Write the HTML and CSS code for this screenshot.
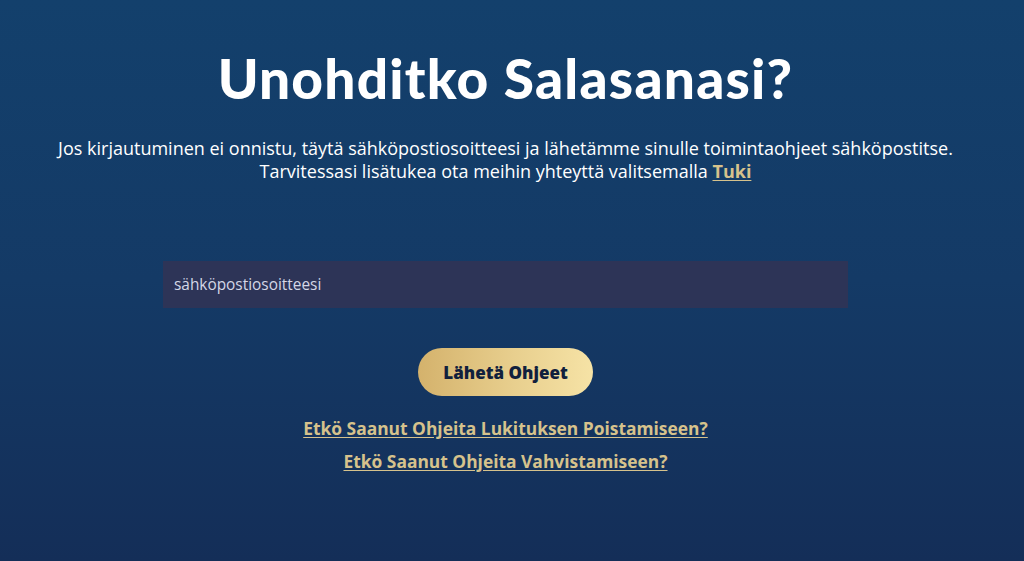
FILE: index.html
```html
<!DOCTYPE html>
<html lang="fi">
<head>
<meta charset="utf-8">
<title>Unohditko Salasanasi?</title>
<link rel="stylesheet" href="styles.css">
</head>
<body>
<main class="page">
  <h1 class="title">Unohditko Salasanasi?</h1>
  <p class="intro">Jos kirjautuminen ei onnistu, täytä sähköpostiosoitteesi ja lähetämme sinulle toimintaohjeet sähköpostitse.<br>Tarvitessasi lisätukea ota meihin yhteyttä valitsemalla <a class="link" href="#">Tuki</a></p>
  <form class="form">
    <input class="email" type="email" placeholder="sähköpostiosoitteesi">
    <button class="send" type="button">Lähetä Ohjeet</button>
  </form>
  <div class="links">
    <a class="link" href="#">Etkö Saanut Ohjeita Lukituksen Poistamiseen?</a>
    <a class="link" href="#">Etkö Saanut Ohjeita Vahvistamiseen?</a>
  </div>
</main>
</body>
</html>
```
FILE: styles.css
```css
* { box-sizing: border-box; }
html, body { margin: 0; height: 100%; }
body {
  background: linear-gradient(180deg, #13406c 0%, #143a66 50%, #142e58 100%);
  font-family: "Open Sans", "Noto Sans", sans-serif;
  color: #ffffff;
  font-variant-ligatures: none;
}
.page {
  display: flex;
  flex-direction: column;
  align-items: center;
  padding: 46px 13px 0 0;
}
.title {
  margin: 0;
  font-family: Lato, "Noto Sans", sans-serif;
  font-size: 55px;
  font-weight: 900;
  line-height: 64px;
  letter-spacing: 1.2px;
}
.intro {
  margin: 27px 0 0;
  text-align: center;
  font-size: 18px;
  line-height: 23px;
  font-weight: 400;
}
.link {
  color: #d6c28c;
  font-weight: 700;
  text-decoration: underline;
  text-underline-offset: 2px;
}
.form {
  display: flex;
  flex-direction: column;
  align-items: center;
  margin-top: 78px;
}
.email {
  width: 685px;
  height: 47px;
  border: none;
  background: #2d3457;
  color: #ffffff;
  padding: 0 11px;
  font-family: "Open Sans", "Noto Sans", sans-serif;
  font-size: 15.4px;
  outline: none;
}
.email::placeholder { color: #d4d7e6; }
.send {
  margin-top: 40px;
  width: 175px;
  height: 48px;
  border: none;
  border-radius: 24px;
  background: linear-gradient(90deg, #d4b26c 0%, #e8cf8e 55%, #f6e3a6 100%);
  color: #10203d;
  font-family: "Open Sans", "Noto Sans", sans-serif;
  font-size: 17px;
  font-weight: 800;
}
.links {
  display: flex;
  flex-direction: column;
  align-items: center;
  gap: 10px;
  margin-top: 21px;
  font-size: 17.4px;
  line-height: 23px;
}
```
